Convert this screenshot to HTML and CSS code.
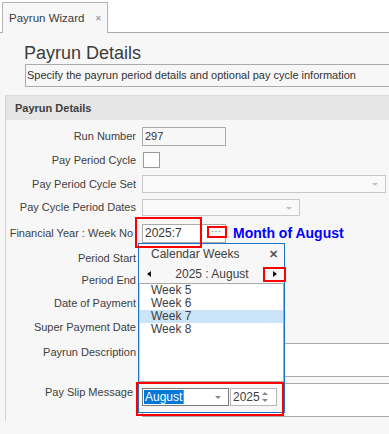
FILE: index.html
```html
<!DOCTYPE html>
<html lang="en">
<head>
    <meta charset="UTF-8">
    <meta name="viewport" content="width=device-width, initial-scale=1.0">
    <title>Payrun Wizard</title>
    <link rel="stylesheet" href="styles.css">
</head>
<body>
    <div class="tabstrip">
        <div class="tab">Payrun Wizard <span class="tab-close">&#x2715;</span></div>
    </div>

    <div class="wizard">
        <h1 class="page-title">Payrun Details</h1>
        <div class="page-desc">Specify the payrun period details and optional pay cycle information</div>

        <div class="group">
            <div class="group-head">Payrun Details</div>
            <div class="group-body">
                <div class="row h24"><label>Run Number</label><div class="edit readonly">297</div></div>
                <div class="row h24"><label>Pay Period Cycle</label><div class="check"></div></div>
                <div class="row h23"><label>Pay Period Cycle Set</label><div class="combo wide"><span class="arrow"></span></div></div>
                <div class="row h24"><label>Pay Cycle Period Dates</label><div class="combo mid"><span class="arrow"></span></div></div>
                <div class="row h28">
                    <label class="narrow">Financial Year : Week No</label>
                    <div class="edit fy">2025:7<span class="dots">&middot;&middot;&middot;</span></div>
                    <span class="month-note">Month of August</span>
                </div>
                <div class="row h21"><label>Period Start</label><div class="edit"></div></div>
                <div class="row h23"><label>Period End</label><div class="edit"></div></div>
                <div class="row h23"><label>Date of Payment</label><div class="edit"></div></div>
                <div class="row h25"><label>Super Payment Date</label><div class="edit"></div></div>
                <div class="row memo-row first"><label>Payrun Description</label><div class="memo"></div></div>
                <div class="row memo-row"><label class="narrow">Pay Slip Message</label><div class="memo"></div></div>

                <!-- calendar weeks dropdown -->
                <div class="popup">
                    <div class="popup-title">Calendar Weeks <span class="popup-close">&#x2715;</span></div>
                    <div class="popup-nav">
                        <span class="tri left"></span>
                        <span>2025 : August</span>
                        <span class="tri right"></span>
                    </div>
                    <ul class="week-list">
                        <li>Week 5</li>
                        <li>Week 6</li>
                        <li class="selected">Week 7</li>
                        <li>Week 8</li>
                    </ul>
                    <div class="popup-foot">
                        <div class="month-combo"><span class="sel">August</span><span class="caret"></span><span class="arrow"></span></div>
                        <div class="spin">2025<span class="spin-btns"><span class="tri up"></span><span class="tri down"></span></span></div>
                    </div>
                </div>

                <!-- highlight marks -->
                <div class="mark m-edit"></div>
                <div class="mark m-dots"></div>
                <div class="mark m-next"></div>
                <div class="mark m-foot"></div>
            </div>
        </div>
    </div>
</body>
</html>
```

FILE: styles.css
```css
body {
    margin: 0;
    height: 434px;
    overflow: hidden;
    background-color: #f7f7f7;
    font-family: "Liberation Sans", Arial, sans-serif;
    font-size: 11px;
    color: #404040;
}
.tabstrip {
    height: 33px;
    box-sizing: border-box;
    padding: 2px 0 0 2px;
    background-color: #fff;
    border-bottom: 1px solid #ababab;
    display: flex;
    align-items: flex-end;
}
.tab {
    width: 106px;
    height: 31px;
    box-sizing: border-box;
    margin-bottom: -1px;
    padding-left: 6px;
    border: 1px solid #b4b4b4;
    border-bottom: none;
    background-color: #f7f7f7;
    display: flex;
    align-items: center;
    font-size: 11.5px;
    color: #3c3c3c;
}
.tab-close {
    margin-left: 11px;
    font-size: 8px;
    color: #8a8a8a;
}
.page-title {
    margin: 10px 0 0 24px;
    font-size: 18px;
    line-height: 21px;
    font-weight: normal;
    color: #3c3c3c;
}
.page-desc {
    margin-left: 25px;
    height: 21px;
    line-height: 21px;
    padding-left: 1px;
    border: 1px solid #ababab;
    border-right: none;
    white-space: nowrap;
    color: #333;
}
.group {
    margin: 8px 0 0 5px;
    border-left: 1px solid #d2d2d2;
    border-top: 1px solid #dcdcdc;
}
.group-head {
    height: 24px;
    line-height: 24px;
    padding-left: 9px;
    background-color: #e6e6e6;
    font-weight: bold;
    color: #404040;
}
.group-body {
    position: relative;
    padding: 4px 0 4px 0;
}
.row {
    display: flex;
    align-items: center;
}
.row label {
    width: 130px;
    flex: none;
    margin-right: 6px;
    text-align: right;
    white-space: nowrap;
}
.row label.narrow {
    width: 127px;
    margin-right: 9px;
}
.h21 { height: 21px; }
.h23 { height: 23px; }
.h24 { height: 24px; }
.h25 { height: 25px; }
.h28 { height: 28px; }
.edit {
    position: relative;
    width: 84px;
    height: 19px;
    box-sizing: border-box;
    padding-left: 2px;
    line-height: 17px;
    border: 1px solid #ababab;
    background-color: #fff;
    color: #333;
}
.edit.readonly {
    background-color: #f7f7f7;
}
.edit.fy {
    font-size: 12px;
}
.dots {
    position: absolute;
    right: 1px;
    top: 2px;
    width: 16px;
    height: 12px;
    line-height: 9px;
    text-align: center;
    font-size: 10px;
    color: #666;
}
.month-note {
    margin-left: 7px;
    font-size: 14px;
    font-weight: bold;
    color: #0000ff;
}
.check {
    margin-left: 1px;
    width: 17px;
    height: 16px;
    box-sizing: border-box;
    border: 1px solid #9a9a9a;
    background-color: #fff;
}
.combo {
    position: relative;
    height: 18px;
    box-sizing: border-box;
    border: 1px solid #c8c8c8;
    background-color: #f9f9f9;
}
.combo.wide { width: 244px; }
.combo.mid { width: 158px; height: 17px; }
.arrow {
    position: absolute;
    right: 7px;
    top: 7px;
    border-left: 3px solid transparent;
    border-right: 3px solid transparent;
    border-top: 3px solid #c4c4c4;
}
.memo-row {
    align-items: flex-start;
    margin-top: 6px;
}
.memo-row.first {
    margin-top: 4px;
}
.memo-row label {
    padding-top: 2px;
    line-height: 14px;
}
.memo {
    flex: 1;
    height: 34px;
    box-sizing: border-box;
    border: 1px solid #ababab;
    border-right: none;
    background-color: #fff;
}

/* dropdown */
.popup {
    position: absolute;
    left: 132px;
    top: 123px;
    width: 147px;
    height: 170px;
    box-sizing: border-box;
    border: 1px solid #1f72c6;
    background-color: #f7f7f7;
    z-index: 2;
}
.popup-title {
    height: 20px;
    line-height: 20px;
    padding-left: 12px;
    display: flex;
    justify-content: space-between;
    font-size: 12px;
    color: #404040;
}
.popup-close {
    margin-right: 6px;
    font-size: 11px;
    font-weight: bold;
    color: #555;
}
.popup-nav {
    height: 19px;
    padding: 0 7px 0 8px;
    display: flex;
    align-items: center;
    justify-content: space-between;
    font-size: 12px;
    color: #404040;
}
.tri {
    width: 0;
    height: 0;
}
.tri.left {
    border-top: 3.5px solid transparent;
    border-bottom: 3.5px solid transparent;
    border-right: 4px solid #111;
}
.tri.right {
    border-top: 3.5px solid transparent;
    border-bottom: 3.5px solid transparent;
    border-left: 4px solid #111;
}
.week-list {
    list-style: none;
    margin: 0;
    padding: 0;
    height: 99px;
    box-sizing: border-box;
    border: 1px solid #a9a9a9;
    border-left-color: #d0d0d0;
    background-color: #fff;
}
.week-list li {
    height: 13px;
    line-height: 13px;
    padding-left: 11px;
    font-size: 12px;
    color: #404040;
}
.week-list li.selected {
    background-color: #cce4f7;
}
.popup-foot {
    padding: 6px 0 0 3px;
    display: flex;
    gap: 1px;
}
.month-combo {
    position: relative;
    width: 87px;
    height: 18px;
    box-sizing: border-box;
    padding: 1px 0 0 1px;
    border: 1px solid #7a7a7a;
    background-color: #fff;
    display: flex;
    align-items: flex-start;
}
.month-combo .sel {
    height: 14px;
    line-height: 14px;
    padding: 0 1px;
    background-color: #0078d7;
    color: #fff;
    font-size: 12px;
}
.caret {
    width: 1px;
    height: 14px;
    background-color: #f08010;
}
.month-combo .arrow {
    right: 7px;
    border-top-color: #888;
}
.spin {
    position: relative;
    width: 47px;
    height: 18px;
    box-sizing: border-box;
    padding-left: 2px;
    line-height: 16px;
    border: 1px solid #b9b9b9;
    background-color: #fff;
    font-size: 12px;
    color: #404040;
}
.spin-btns {
    position: absolute;
    right: 8px;
    top: 3px;
    display: flex;
    flex-direction: column;
    gap: 4px;
}
.tri.up {
    border-left: 3px solid transparent;
    border-right: 3px solid transparent;
    border-bottom: 3px solid #888;
}
.tri.down {
    border-left: 3px solid transparent;
    border-right: 3px solid transparent;
    border-top: 3px solid #888;
}

/* red highlight marks */
.mark {
    position: absolute;
    box-sizing: border-box;
    border: 2px solid #ff0000;
    z-index: 5;
}
.m-edit { left: 129px; top: 97px; width: 67px; height: 31px; }
.m-dots { left: 201px; top: 106px; width: 20px; height: 12px; }
.m-next { left: 257px; top: 147px; width: 23px; height: 15px; }
.m-foot { left: 130px; top: 262px; width: 148px; height: 34px; }
```
